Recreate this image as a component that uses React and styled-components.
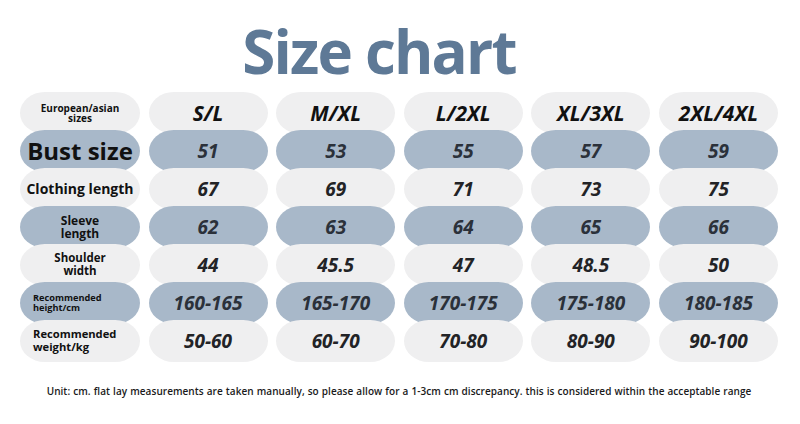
import React from "react";
import styled, { createGlobalStyle } from "styled-components";

const GlobalStyle = createGlobalStyle`
  html, body {
    margin: 0;
    padding: 0;
    background: #ffffff;
  }
  body {
    font-family: "Open Sans", "Liberation Sans", sans-serif;
  }
`;

const Page = styled.div`
  width: 800px;
  height: 424px;
  overflow: hidden;
  background: #ffffff;
  display: flex;
  flex-direction: column;
`;

const Title = styled.h1`
  margin: 0;
  height: 92px;
  display: flex;
  align-items: center;
  justify-content: center;
  padding-right: 42px;
  padding-top: 10px;
  box-sizing: border-box;
  font-size: 60px;
  font-weight: 700;
  letter-spacing: -1.8px;
  color: #5e7996;
`;

const Table = styled.div`
  display: flex;
  flex-direction: column;
  padding-left: 20px;
  width: 758px;
`;

const Row = styled.div`
  display: grid;
  grid-template-columns: 120px repeat(5, 1fr);
  column-gap: 8.5px;
  height: 42px;

  & + & {
    margin-top: -4px;
  }
`;

const Pill = styled.div`
  display: flex;
  align-items: center;
  justify-content: center;
  border-radius: 26px / 22px;
  background: ${(p) => (p.$tone === "blue" ? "#a8b8c9" : "#efeff0")};
  box-sizing: border-box;
`;

const Label = styled(Pill)`
  justify-content: ${(p) => (p.$left ? "flex-start" : "center")};
  padding: ${(p) => (p.$left ? "0 0 0 13px" : "0 6px")};
  text-align: ${(p) => (p.$left ? "left" : "center")};
  font-weight: 700;
  color: #111111;
  font-size: ${(p) => p.$size}px;
  line-height: ${(p) => p.$line || 1.12};
`;

const Value = styled(Pill)`
  font-weight: 700;
  font-style: italic;
  font-size: ${(p) => (p.$head ? 21 : 19)}px;
  color: ${(p) => (p.$head ? "#111111" : p.$tone === "blue" ? "#2b313a" : "#222326")};
  padding-bottom: 1px;
`;

const Note = styled.p`
  margin: 0;
  margin-top: 22px;
  text-align: center;
  font-size: 10px;
  font-weight: 600;
  letter-spacing: 0.05px;
  word-spacing: 0.4px;
  color: #1a1a1a;
  padding-right: 2px;
`;

const sizes = ["S/L", "M/XL", "L/2XL", "XL/3XL", "2XL/4XL"];

const rows = [
  { label: "Bust size", size: 24, tone: "blue", values: ["51", "53", "55", "57", "59"] },
  { label: "Clothing length", size: 14, tone: "light", values: ["67", "69", "71", "73", "75"] },
  { label: ["Sleeve", "length"], size: 12, tone: "blue", values: ["62", "63", "64", "65", "66"] },
  { label: ["Shoulder", "width"], size: 11.5, tone: "light", values: ["44", "45.5", "47", "48.5", "50"] },
  {
    label: ["Recommended", "height/cm"],
    size: 9.2,
    tone: "blue",
    left: true,
    values: ["160-165", "165-170", "170-175", "175-180", "180-185"],
  },
  {
    label: ["Recommended", "weight/kg"],
    size: 11.2,
    tone: "light",
    left: true,
    values: ["50-60", "60-70", "70-80", "80-90", "90-100"],
  },
];

const renderLabel = (label) =>
  Array.isArray(label) ? (
    <span>
      {label[0]}
      <br />
      {label[1]}
    </span>
  ) : (
    label
  );

const App = () => {
  return (
    <Page>
      <GlobalStyle />
      <Title>Size chart</Title>
      <Table>
        <Row>
          <Label $tone="light" $size={10} $line={1.05}>
            <span>
              European/asian
              <br />
              sizes
            </span>
          </Label>
          {sizes.map((s) => (
            <Value key={s} $tone="light" $head>
              {s}
            </Value>
          ))}
        </Row>
        {rows.map((row, i) => (
          <Row key={i}>
            <Label $tone={row.tone} $size={row.size} $left={row.left}>
              {renderLabel(row.label)}
            </Label>
            {row.values.map((v, j) => (
              <Value key={j} $tone={row.tone}>
                {v}
              </Value>
            ))}
          </Row>
        ))}
      </Table>
      <Note>
        Unit: cm. flat lay measurements are taken manually, so please allow for a 1-3cm cm discrepancy. this is
        considered within the acceptable range
      </Note>
    </Page>
  );
};

export default App;
